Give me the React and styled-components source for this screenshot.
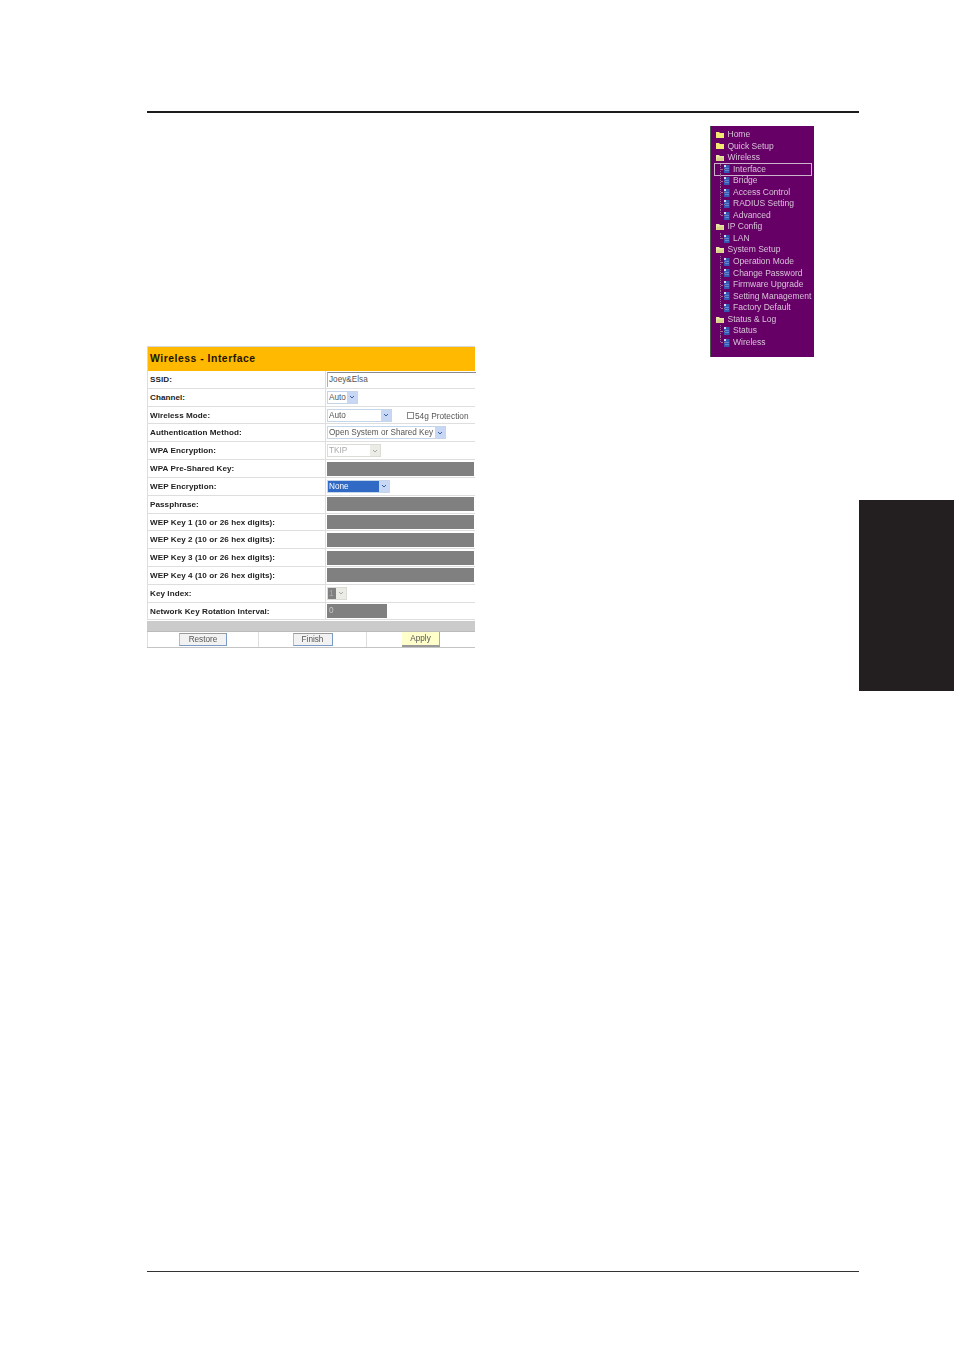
import React from "react";
import styled, { createGlobalStyle } from "styled-components";

const Global = createGlobalStyle`
  html, body { margin: 0; padding: 0; background: #fff; }
  body { font-family: "Liberation Sans", Arial, sans-serif; }
`;

const Page = styled.div`
  display: grid;
  grid-template-columns: 147px 712px 95px;
  width: 954px;
  height: 1351px;
  overflow: hidden;
  background: #fff;
`;
const Sheet = styled.main`
  grid-column: 2;
  display: flex;
  flex-direction: column;
  padding-top: 111px;
  padding-bottom: 79px;
`;
const TopRule = styled.hr`
  margin: 0;
  border: 0;
  height: 2px;
  background: #1c1c1c;
`;
const BottomRule = styled.hr`
  margin: auto 0 0;
  border: 0;
  height: 1px;
  background: #333;
`;
const Content = styled.div`
  display: grid;
  grid-template-columns: 328px 1fr;
  align-items: start;
`;
const SideTab = styled.aside`
  grid-column: 3;
  height: 191px;
  margin-top: 500px;
  background: #231f20;
`;

/* navigation tree */
const Nav = styled.nav`
  justify-self: end;
  margin: 13px 45px 0 0;
  width: 104px;
  height: 231px;
  box-sizing: border-box;
  padding-top: 3px;
  background: #660066;
  border-left: 1px solid #4d5a4d;
  font-size: 8.5px;
  color: #d9c3d9;
  filter: blur(0.3px);
`;
const NavItem = styled.div`
  position: relative;
  box-sizing: border-box;
  display: flex;
  align-items: center;
  height: 11.56px;
  line-height: 11.56px;
  white-space: nowrap;
  padding-left: ${(p) => (p.$child ? "13px" : "5px")};
`;
const NavLabel = styled.span`
  margin-left: ${(p) => (p.$child ? "3px" : "3.5px")};
`;
const Selected = styled.span`
  position: absolute;
  left: 3px;
  right: 2px;
  top: -0.5px;
  bottom: -0.5px;
  border: 1px solid #cdb4cd;
`;
const Branch = styled.span`
  position: absolute;
  left: 8.5px;
  top: ${(p) => (p.$first ? "0" : "-1px")};
  width: 4px;
  height: ${(p) => (p.$last ? "6.5px" : "12.5px")};
  border-left: 1px dotted #946c94;
  box-sizing: border-box;
  &::after {
    content: "";
    position: absolute;
    left: 0;
    top: ${(p) => (p.$first ? "5.5px" : "6.5px")};
    width: 4px;
    border-top: 1px dotted #946c94;
  }
`;

const Folder = ({ open }) => (
  <svg width="8" height="7" viewBox="0 0 8 7" style={{ flex: "none", marginTop: "-1px" }}>
    <path d="M0 1h3l1 1h4v5H0z" fill={open ? "#e9e6a6" : "#f2ea70"} />
    {open && <path d="M0 7l1.4-3.4H8L6.8 7z" fill="#d8d486" />}
  </svg>
);
const Doc = () => (
  <svg width="6" height="8" viewBox="0 0 6 8" style={{ flex: "none" }}>
    <path d="M0 0h5.5v8H0z" fill="#3558b0" />
    <path d="M0 0h2v2H0z" fill="#cfd9f0" />
    <path d="M1 3h4v1H1zM1 5h4v1H1z" fill="#6484d4" />
  </svg>
);

const navItems = [
  ["Home", 0], ["Quick Setup", 0], ["Wireless", 2],
  ["Interface", 1, "sel first"], ["Bridge", 1], ["Access Control", 1], ["RADIUS Setting", 1], ["Advanced", 1, "last"],
  ["IP Config", 2], ["LAN", 1, "first last"],
  ["System Setup", 2],
  ["Operation Mode", 1, "first"], ["Change Password", 1], ["Firmware Upgrade", 1], ["Setting Management", 1], ["Factory Default", 1, "last"],
  ["Status & Log", 2],
  ["Status", 1, "first"], ["Wireless", 1, "last"],
];

/* settings form */
const Form = styled.section`
  margin-top: 233px;
  width: 328px;
  background: #fff;
  filter: blur(0.3px);
`;
const Title = styled.h2`
  margin: 0;
  box-sizing: border-box;
  height: 25px;
  padding: 0 0 0 2px;
  border-top: 1px solid #d8d8d8;
  border-left: 1px solid #d8d8d8;
  background: #ffb900;
  font-size: 10.4px;
  line-height: 24px;
  font-weight: 700;
  letter-spacing: 0.52px;
  color: #1c1400;
`;
const Row = styled.div`
  display: grid;
  grid-template-columns: 178px 150px;
  box-sizing: border-box;
  height: 17.82px;
  border-bottom: 1px solid #dedede;
  border-left: 1px solid #dedede;
`;
const Label = styled.div`
  padding-left: 2px;
  font-size: 8.1px;
  line-height: 17px;
  font-weight: 700;
  letter-spacing: 0.06px;
  color: #222;
  white-space: nowrap;
  border-right: 1px solid #dedede;
`;
const Field = styled.div`
  display: flex;
  align-items: center;
  padding-left: 1px;
  font-size: 8.2px;
  color: #555;
  min-width: 0;
`;
const TextInput = styled.div`
  box-sizing: border-box;
  width: 100%;
  height: 15px;
  line-height: 13px;
  padding-left: 1px;
  border-top: 1px solid #8a8a8a;
  border-left: 1px solid #b0b0b0;
  color: #555;
`;
const Disabled = styled.div`
  box-sizing: border-box;
  width: ${(p) => p.$w}px;
  height: 14px;
  line-height: 14px;
  padding-left: 2px;
  background: #808080;
  color: #c8c8c8;
`;
const SelectBox = styled.div`
  box-sizing: border-box;
  display: flex;
  width: ${(p) => p.$w}px;
  height: 13px;
  border: 1px solid ${(p) => (p.$off ? "#dcdcd6" : "#c5d5ea")};
  line-height: 11px;
  background: #fff;
  color: ${(p) => (p.$off ? "#aaa" : "#555")};
`;
const SelectValue = styled.span`
  flex: 1;
  padding-left: 1px;
  white-space: nowrap;
  overflow: hidden;
  background: ${(p) => (p.$hi ? "#316ac5" : p.$gray ? "#808080" : "transparent")};
  color: ${(p) => (p.$hi ? "#fff" : "inherit")};
`;
const Arrow = styled.span`
  flex: none;
  width: 10px;
  display: flex;
  align-items: center;
  justify-content: center;
  background: ${(p) => (p.$off ? "#ecece6" : "#c8d8f4")};
  color: ${(p) => (p.$off ? "#aaa" : "#3a5ea8")};
`;
const Check = styled.span`
  box-sizing: border-box;
  width: 7px;
  height: 7px;
  margin: 1px 1px 0 15px;
  border: 1px solid #8a8a8a;
  background: #fff;
`;
const CheckText = styled.span`
  margin-top: 2px;
  font-size: 8.3px;
  color: #555;
  white-space: nowrap;
`;
const Strip = styled.div`
  height: 10px;
  margin-top: 0.5px;
  background: #cbcbcb;
  border-bottom: 1px solid #bbb;
`;
const Buttons = styled.div`
  display: grid;
  grid-template-columns: 111px 108px 109px;
  height: 15px;
  border-bottom: 1px solid #c4c4c4;
`;
const ButtonCell = styled.div`
  display: flex;
  justify-content: ${(p) => p.$align || "center"};
  align-items: center;
  border-left: 1px solid #dedede;
  padding-left: ${(p) => p.$pad || 0}px;
`;
const Btn = styled.button`
  box-sizing: border-box;
  width: ${(p) => p.$w}px;
  height: 13px;
  padding: 0;
  font: 8.2px "Liberation Sans", Arial, sans-serif;
  color: #555;
  background: #f2f2f2;
  border: 1px solid #9a9a9a;
  border-right-color: #7a9ac8;
  border-bottom-color: #7a9ac8;
  border-left-color: #a8bcd8;
`;
const ApplyBtn = styled(Btn)`
  height: 15px;
  background: #ffffcc;
  border: 0;
  border-right: 1px solid #aaa;
  border-bottom: 2px solid #999;
`;

const Chevron = () => (
  <svg width="6" height="4" viewBox="0 0 6 4">
    <path d="M1 1l2 2 2-2" fill="none" stroke="currentColor" strokeWidth="1" />
  </svg>
);
const Select = ({ w, value, off, hi, gray }) => (
  <SelectBox $w={w} $off={off}>
    <SelectValue $hi={hi} $gray={gray}>{value}</SelectValue>
    <Arrow $off={off}><Chevron /></Arrow>
  </SelectBox>
);

const keyLabel = (n) => `WEP Key ${n} (10 or 26 hex digits):`;

const rows = [
  ["SSID:", <TextInput>Joey&amp;Elsa</TextInput>],
  ["Channel:", <Select w={31} value="Auto" />],
  ["Wireless Mode:", <><Select w={65} value="Auto" /><Check /><CheckText>54g Protection</CheckText></>],
  ["Authentication Method:", <Select w={119} value="Open System or Shared Key" />],
  ["WPA Encryption:", <Select w={54} value="TKIP" off />],
  ["WPA Pre-Shared Key:", <Disabled $w={147} />],
  ["WEP Encryption:", <Select w={63} value="None" hi />],
  ["Passphrase:", <Disabled $w={147} />],
  [keyLabel(1), <Disabled $w={147} />],
  [keyLabel(2), <Disabled $w={147} />],
  [keyLabel(3), <Disabled $w={147} />],
  [keyLabel(4), <Disabled $w={147} />],
  ["Key Index:", <Select w={20} value="1" off gray />],
  ["Network Key Rotation Interval:", <Disabled $w={60}>0</Disabled>],
];

export default function App() {
  return (
    <Page>
      <Global />
      <Sheet>
        <TopRule />
        <Content>
          <Form>
            <Title>Wireless - Interface</Title>
            {rows.map(([label, control], i) => (
              <Row key={i}>
                <Label>{label}</Label>
                <Field>{control}</Field>
              </Row>
            ))}
            <Strip />
            <Buttons>
              <ButtonCell><Btn $w={48}>Restore</Btn></ButtonCell>
              <ButtonCell><Btn $w={40}>Finish</Btn></ButtonCell>
              <ButtonCell $align="flex-start" $pad={35}><ApplyBtn $w={38}>Apply</ApplyBtn></ButtonCell>
            </Buttons>
          </Form>
          <Nav>
            {navItems.map(([name, kind, flags = ""], i) => (
              <NavItem key={i} $child={kind === 1}>
                {flags.includes("sel") && <Selected />}
                {kind === 1 && <Branch $first={flags.includes("first")} $last={flags.includes("last")} />}
                {kind === 1 ? <Doc /> : <Folder open={kind === 2} />}
                <NavLabel $child={kind === 1}>{name}</NavLabel>
              </NavItem>
            ))}
          </Nav>
        </Content>
        <BottomRule />
      </Sheet>
      <SideTab />
    </Page>
  );
}
